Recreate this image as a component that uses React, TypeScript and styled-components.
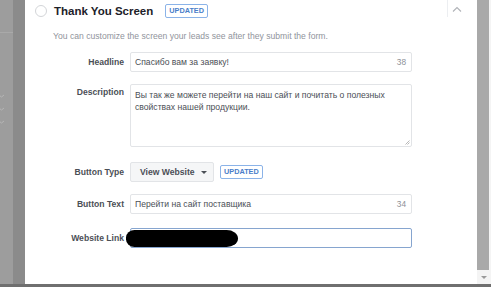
import styled, { createGlobalStyle } from 'styled-components'

const GlobalStyle = createGlobalStyle`
    html, body {
        margin: 0;
        padding: 0;
        overflow: hidden;
        background: #6f6f6f;
    }
    body {
        font-family: "Liberation Sans", Arial, sans-serif;
    }
`

const Screen = styled.div`
    display: flex;
    flex-direction: column;
    width: 491px;
    height: 287px;
`

const Workspace = styled.div`
    display: flex;
    height: 284px;
`

const Backdrop = styled.div`
    width: 13px;
    background: #9d9d9d;
    display: flex;
    flex-direction: column;
`

const BackdropRule = styled.div`
    margin-top: 32px;
    height: 1px;
    background: #a9a9a9;
`

const BackdropTick = styled.svg<{ $mt: number }>`
    display: block;
    margin-top: ${p => p.$mt}px;
`

const Shade = styled.div`
    width: 12px;
    background: #8b8b8b;
`

const Panel = styled.div`
    flex: 1;
    background: #fff;
    display: flex;
    flex-direction: column;
`

const Scrollbar = styled.div`
    width: 14px;
    background: #f4f4f4;
    display: flex;
    flex-direction: column;
    align-items: flex-start;
`

const Thumb = styled.div`
    width: 12px;
    height: 270px;
    background: #a9a9a9;
`

const ArrowDown = styled.div`
    margin: 6px 0 0 4px;
    width: 0;
    height: 0;
    border-left: 3px solid transparent;
    border-right: 3px solid transparent;
    border-top: 3px solid #9a9a9a;
`

const Header = styled.div`
    display: flex;
    align-items: center;
    height: 22px;
    padding-left: 10px;
`

const Radio = styled.span`
    width: 12px;
    height: 12px;
    border-radius: 50%;
    border: 1px solid #d3d5d8;
    box-sizing: border-box;
    margin-right: 7px;
`

const Title = styled.span`
    font-size: 11.5px;
    font-weight: bold;
    color: #1d2129;
`

const Badge = styled.span<{ $ml: number }>`
    margin-left: ${p => p.$ml}px;
    border: 1px solid #8bb3e8;
    border-radius: 2px;
    color: #4a7ec9;
    font-size: 7.3px;
    font-weight: bold;
    padding: 2px 3px;
    line-height: 8px;
`

const Collapse = styled.div`
    margin-left: auto;
    margin-right: 12px;
    align-self: flex-start;
    height: 17px;
    width: 17px;
    border-left: 1px solid #eceef1;
    display: flex;
    align-items: center;
    justify-content: center;
`

const Subtitle = styled.div`
    margin: 9px 0 0 28px;
    font-size: 8.6px;
    color: #90949c;
`

const Form = styled.div`
    display: flex;
    flex-direction: column;
    margin-top: 11px;
`

const Row = styled.div<{ $mb: number; $top?: boolean }>`
    display: flex;
    align-items: ${p => (p.$top ? 'flex-start' : 'center')};
    margin-bottom: ${p => p.$mb}px;
`

const Label = styled.div<{ $pt?: number }>`
    width: 99px;
    margin-right: 6px;
    text-align: right;
    font-size: 8.6px;
    font-weight: bold;
    color: #4b4f56;
    padding-top: ${p => p.$pt ?? 0}px;
`

const Field = styled.div<{ $h: number; $focus?: boolean }>`
    position: relative;
    width: 282px;
    height: ${p => p.$h}px;
    box-sizing: border-box;
    border: 1px solid ${p => (p.$focus ? '#86a5cf' : '#e2e4e7')};
    border-radius: 2px;
    display: flex;
    align-items: center;
    padding: 0 5px 0 4px;
    font-size: 8.6px;
    color: #4b4f56;
`

const Area = styled(Field)`
    align-items: flex-start;
    padding-top: 4px;
    line-height: 12px;
`

const Count = styled.span`
    margin-left: auto;
    color: #8d9097;
    font-size: 8.3px;
`

const Grip = styled.svg`
    position: absolute;
    right: 1px;
    bottom: 1px;
`

const Select = styled.div`
    width: 84px;
    height: 20px;
    box-sizing: border-box;
    background: #f5f6f7;
    border: 1px solid #e2e4e7;
    border-radius: 2px;
    display: flex;
    align-items: center;
    padding-left: 9px;
    font-size: 8.6px;
    font-weight: bold;
    color: #4b4f56;
`

const Caret = styled.span`
    margin-left: 6px;
    width: 0;
    height: 0;
    border-left: 3px solid transparent;
    border-right: 3px solid transparent;
    border-top: 3.5px solid #4b4f56;
`

const Redaction = styled.div`
    position: absolute;
    left: -5px;
    top: 1px;
    width: 112px;
    height: 17px;
    background: #000;
    border-radius: 9px 12px 12px 9px / 8px 9px 9px 8px;
`

const Tick = ({ mt }: { mt: number }) => (
    <BackdropTick $mt={mt} width="5" height="4" viewBox="0 0 5 4">
        <path d="M-1 1 L1.5 3 L4 1" fill="none" stroke="#b8b8b8" strokeWidth="0.9" />
    </BackdropTick>
)

export default function App() {
    return (
        <>
            <GlobalStyle />
            <Screen>
                <Workspace>
                    <Backdrop>
                        <BackdropRule />
                        <Tick mt={61} />
                        <Tick mt={9} />
                        <Tick mt={9} />
                    </Backdrop>
                    <Shade />
                    <Panel>
                        <Header>
                            <Radio />
                            <Title>Thank You Screen</Title>
                            <Badge $ml={12}>UPDATED</Badge>
                            <Collapse>
                                <svg width="10" height="6" viewBox="0 0 10 6">
                                    <path d="M1 5.5 L5 1.5 L9 5.5" fill="none" stroke="#b0b3b8" strokeWidth="1.1" />
                                </svg>
                            </Collapse>
                        </Header>
                        <Subtitle>You can customize the screen your leads see after they submit the form.</Subtitle>
                        <Form>
                            <Row $mb={12}>
                                <Label>Headline</Label>
                                <Field $h={20}>
                                    Спасибо вам за заявку!
                                    <Count>38</Count>
                                </Field>
                            </Row>
                            <Row $mb={15} $top>
                                <Label $pt={3}>Description</Label>
                                <Area $h={63}>
                                    Вы так же можете перейти на наш сайт и почитать о полезных<br />
                                    свойствах нашей продукции.
                                    <Grip width="5" height="5" viewBox="0 0 5 5">
                                        <path d="M4.5 0.5 L0.5 4.5 M4.5 2.5 L2.5 4.5" stroke="#999" strokeWidth="0.7" />
                                    </Grip>
                                </Area>
                            </Row>
                            <Row $mb={12}>
                                <Label>Button Type</Label>
                                <Select>
                                    View Website
                                    <Caret />
                                </Select>
                                <Badge $ml={6}>UPDATED</Badge>
                            </Row>
                            <Row $mb={14}>
                                <Label>Button Text</Label>
                                <Field $h={20}>
                                    Перейти на сайт поставщика
                                    <Count>34</Count>
                                </Field>
                            </Row>
                            <Row $mb={0}>
                                <Label>Website Link</Label>
                                <Field $h={20} $focus>
                                    <Redaction />
                                </Field>
                            </Row>
                        </Form>
                    </Panel>
                    <Scrollbar>
                        <Thumb />
                        <ArrowDown />
                    </Scrollbar>
                </Workspace>
            </Screen>
        </>
    )
}
